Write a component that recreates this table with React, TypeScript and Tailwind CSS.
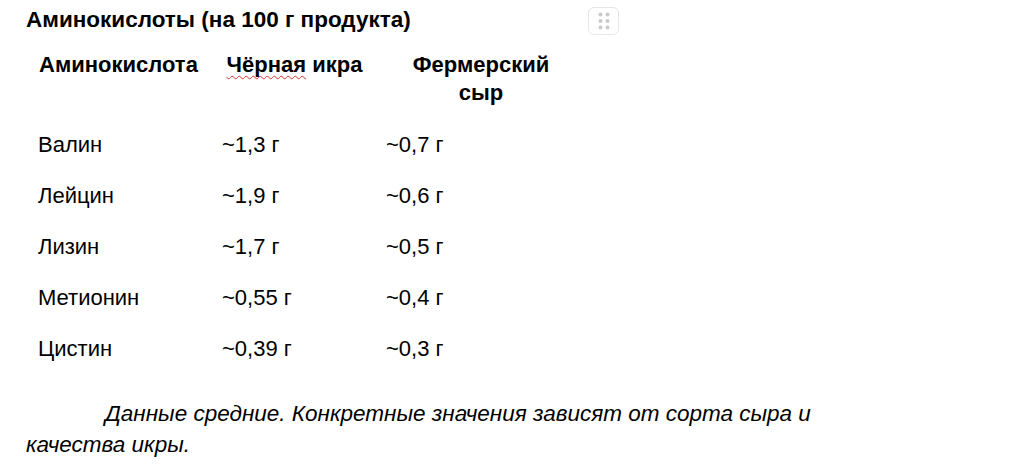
import React from "react";

const rows = [
  ["Валин", "~1,3 г", "~0,7 г"],
  ["Лейцин", "~1,9 г", "~0,6 г"],
  ["Лизин", "~1,7 г", "~0,5 г"],
  ["Метионин", "~0,55 г", "~0,4 г"],
  ["Цистин", "~0,39 г", "~0,3 г"],
];

function DragHandle() {
  return (
    <div className="absolute left-[588px] top-[7px] w-[31px] h-[28px] rounded-[6px] border border-[#e6e6e6] bg-white flex items-center justify-center">
      <svg width="12" height="18" viewBox="0 0 12 18">
        {[2.5, 9, 15.5].map((y) =>
          [2.5, 9.5].map((x) => <circle key={`${x}-${y}`} cx={x} cy={y} r="2" fill="#c9c9c9" />)
        )}
      </svg>
    </div>
  );
}

export default function App() {
  return (
    <div className="relative w-[1024px] h-[469px] bg-white text-black overflow-hidden" style={{ fontFamily: '"Liberation Sans", Arial, sans-serif' }}>
      <DragHandle />
      <div className="pt-[6px]">
        <h1 className="pl-[26px] text-[22.5px] leading-[28px] font-bold">Аминокислоты (на 100 г продукта)</h1>
        <div className="ml-[22px] grid grid-cols-[193px_159px_214px] mt-[17px]">
          <div className="text-center font-bold text-[22px] leading-[28px]">Аминокислота</div>
          <div className="text-center font-bold text-[22px] leading-[28px]">
            <span className="underline decoration-wavy decoration-[#e0322b] decoration-1 underline-offset-[3px] [text-decoration-skip-ink:none]">Чёрная</span> икра
          </div>
          <div className="text-center font-bold text-[22px] leading-[28px] px-[30px]">Фермерский сыр</div>
          <div className="col-span-3 h-[12px]" />
          {rows.map((r) => (
            <React.Fragment key={r[0]}>
              <div className="pl-[16px] text-[22px] h-[51px] flex items-center">{r[0]}</div>
              <div className="pl-[7px] text-[22px] h-[51px] flex items-center">{r[1]}</div>
              <div className="pl-[12px] text-[22px] h-[51px] flex items-center">{r[2]}</div>
            </React.Fragment>
          ))}
        </div>
        <p className="pl-[26px] italic text-[22.5px] leading-[31px] indent-[79px] w-[860px] mt-[24px]">
          Данные средние. Конкретные значения зависят от сорта сыра и качества икры.
        </p>
      </div>
    </div>
  );
}
